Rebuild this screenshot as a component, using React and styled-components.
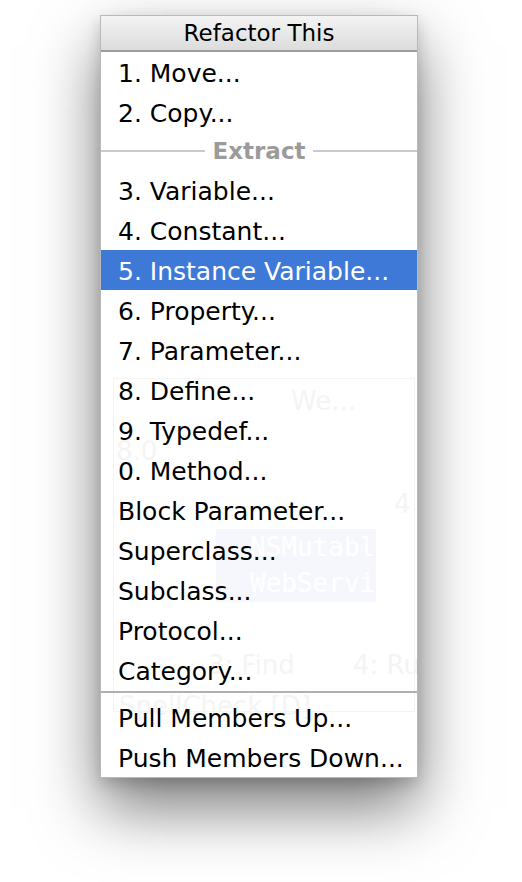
import React from 'react';
import styled, { createGlobalStyle } from 'styled-components';

const GlobalStyle = createGlobalStyle`
	html, body {
		margin: 0;
		padding: 0;
		background: #fff;
	}
	body {
		font-family: 'DejaVu Sans', 'Liberation Sans', sans-serif;
		-webkit-font-smoothing: antialiased;
	}
`;

const Page = styled.div`
	width: 522px;
	height: 882px;
	padding: 15px 0 0 100px;
	box-sizing: border-box;
`;

const Menu = styled.div`
	width: 318px;
	box-sizing: border-box;
	border: 1px solid #b9b9b9;
	background: #fff;
	box-shadow: 0 30px 60px rgba(0, 0, 0, 0.52), 0 6px 14px rgba(0, 0, 0, 0.16);
`;

const Header = styled.div`
	height: 34px;
	display: flex;
	align-items: center;
	justify-content: center;
	background: linear-gradient(#f4f4f4, #dcdcdc);
	border-bottom: 2px solid #9c9c9c;
	font-size: 23px;
	color: #000;
`;

const Body = styled.div`
	position: relative;
	display: flex;
	flex-direction: column;
`;

const Item = styled.div`
	position: relative;
	z-index: 1;
	height: 40px;
	display: flex;
	align-items: center;
	padding-left: 17px;
	padding-top: 2px;
	box-sizing: border-box;
	font-size: 25px;
	white-space: nowrap;
	color: ${(p) => (p.$active ? '#fff' : '#000')};
	background: ${(p) => (p.$active ? '#3f79d8' : 'transparent')};
`;

const Section = styled.div`
	position: relative;
	z-index: 1;
	height: 38px;
	display: flex;
	align-items: center;
	gap: 7px;
	font-size: 23px;
	font-weight: bold;
	color: #9b9b9b;

	&::before,
	&::after {
		content: '';
		flex: 1;
		height: 2px;
		background: #cacaca;
	}
`;

const Divider = styled.div`
	position: relative;
	z-index: 1;
	height: 2px;
	margin: 1px 0 4px;
	background: #b0b0b0;
`;

/* faded tool window showing through the translucent menu */
const Ghost = styled.div`
	position: absolute;
	left: 12px;
	top: 326px;
	width: 302px;
	height: 334px;
	display: flex;
	flex-direction: column;
	opacity: 0.04;
	color: #000;
	font-size: 26px;
	border: 1px solid #000;
	box-sizing: border-box;
`;

const GhostLine = styled.div`
	flex: none;
	height: ${(p) => p.$h}px;
	line-height: ${(p) => p.$h}px;
	padding-left: ${(p) => p.$indent}px;
	white-space: nowrap;
`;

const GhostTabs = styled.div`
	flex: none;
	height: 42px;
	line-height: 42px;
	display: grid;
	grid-template-columns: 94px 145px auto;
	white-space: nowrap;
`;

const GhostBlock = styled.div`
	flex: none;
	width: 160px;
	height: 73px;
	margin: 0 0 42px 102px;
	padding-left: 34px;
	box-sizing: border-box;
	background: #2a5bd0;
	color: #fff;
	font-family: 'DejaVu Sans Mono', monospace;
	line-height: 36px;
`;

const items = [
	'3. Variable...',
	'4. Constant...',
	'5. Instance Variable...',
	'6. Property...',
	'7. Parameter...',
	'8. Define...',
	'9. Typedef...',
	'0. Method...',
	'Block Parameter...',
	'Superclass...',
	'Subclass...',
	'Protocol...',
	'Category...',
];

export default function App() {
	return (
		<Page>
			<GlobalStyle />
			<Menu>
				<Header>Refactor This</Header>
				<Body>
					<Ghost>
						<GhostLine $h={45} $indent={177}>We...</GhostLine>
						<GhostLine $h={55} $indent={2}>8.0</GhostLine>
						<GhostLine $h={50} $indent={280}>4</GhostLine>
						<GhostBlock>
							NSMutabl
							<br />
							WebServi
						</GhostBlock>
						<GhostTabs>
							<span />
							<span>3: Find</span>
							<span>4: Ru</span>
						</GhostTabs>
						<GhostLine $h={40} $indent={5}>SpellCheck [D]</GhostLine>
					</Ghost>
					<Item>1. Move...</Item>
					<Item>2. Copy...</Item>
					<Section>Extract</Section>
					{items.map((label) => (
						<Item key={label} $active={label.startsWith('5.')}>
							{label}
						</Item>
					))}
					<Divider />
					<Item>Pull Members Up...</Item>
					<Item>Push Members Down...</Item>
				</Body>
			</Menu>
		</Page>
	);
}
